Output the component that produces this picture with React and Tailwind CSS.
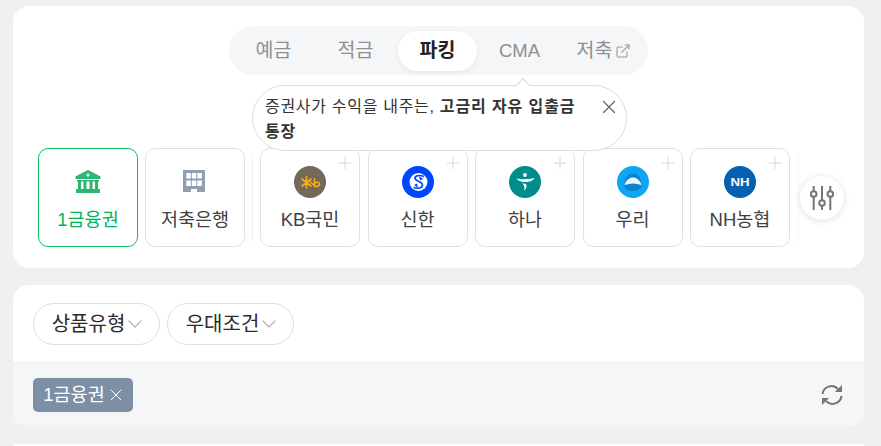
import React from "react";
import { X, Plus, ChevronDown, ExternalLink } from "lucide-react";

const font = "font-['Liberation_Sans','Noto_Sans_CJK_KR',sans-serif]";

function BankIcon() {
  return (
    <svg width="26" height="24" viewBox="0 0 26 24" fill="#2bb673">
      <path d="M13 0 L25.500 6.500 V9 H0.500 V6.500 Z" />
      <circle cx="13" cy="5" r="1.500" fill="#fff" />
      <rect x="2" y="10" width="22" height="1.500" />
      <rect x="3" y="11" width="3" height="8" />
      <rect x="8.500" y="11" width="3" height="8" />
      <rect x="14.500" y="11" width="3" height="8" />
      <rect x="20" y="11" width="3" height="8" />
      <rect x="1" y="19" width="24" height="4" />
    </svg>
  );
}

function BuildingIcon() {
  return (
    <svg width="22" height="22" viewBox="0 0 22 22" className="-mt-[2px] -ml-[2px]">
      <rect width="22" height="22" fill="#8e9eb3" />
      <g fill="#fff">
        <rect x="3.300" y="3" width="4.500" height="5.500" />
        <rect x="8.800" y="3" width="4.500" height="5.500" />
        <rect x="14.300" y="3" width="4.500" height="5.500" />
        <rect x="3.300" y="10.500" width="4.500" height="5.500" />
        <rect x="8.800" y="10.500" width="4.500" height="5.500" />
        <rect x="14.300" y="10.500" width="4.500" height="5.500" />
        <rect x="8" y="19" width="6" height="3" />
      </g>
    </svg>
  );
}

function KbLogo() {
  return (
    <svg width="32" height="32" viewBox="0 0 32 32">
      <circle cx="16" cy="16" r="16" fill="#746859" />
      <g stroke="#f5b21a" strokeWidth="1.600" fill="none" strokeLinecap="round">
        <path d="M12.500 10.500 V22 M8 13 L17 20 M17 13 L8 20" />
        <path d="M15 15 L20 19 M20.500 13 V20 C22 21 25.500 20.500 25.500 18 C25.500 16 22 15.500 20.500 17.500" />
      </g>
    </svg>
  );
}

function ShinhanLogo() {
  return (
    <svg width="32" height="32" viewBox="0 0 32 32">
      <circle cx="16" cy="16" r="16" fill="#0046ff" />
      <circle cx="16.500" cy="16" r="9" fill="#fff" />
      <path d="M22 10.500 C17 8.500 12.500 10 13 12.500 C13.500 15.500 20.500 15 20.500 19 C20.500 22 16 23 11.500 21.500" stroke="#0046ff" strokeWidth="1.600" fill="none" />
      <path d="M17 10 L21 13 L18 14.500 Z M16 22 L12 19 L15 17.500 Z" fill="#0046ff" />
    </svg>
  );
}

function HanaLogo() {
  return (
    <svg width="32" height="32" viewBox="0 0 32 32">
      <circle cx="16" cy="16" r="16" fill="#008c8c" />
      <circle cx="16" cy="9" r="1.900" fill="#fff" />
      <path d="M7 12.500 C12 13.500 20 13.500 25.500 12 C24 15 20 16 17 16 C13.500 16 10 15.500 7 12.500 Z" fill="#fff" />
      <path d="M13.500 17.500 C16 17 18 18 17.500 20.500 C17.200 22 16.500 23.500 15 24.500 C15.800 22.500 15.800 20 13.500 17.500 Z" fill="#fff" />
    </svg>
  );
}

function WooriLogo() {
  return (
    <svg width="32" height="32" viewBox="0 0 32 32">
      <circle cx="16" cy="16" r="16" fill="#0ea5f5" />
      <path d="M7 20 C14 17 19 17 25 20 C23 24 20 25 16 25 C12 25 9 24 7 20 Z" fill="#0d84cf" />
      <path d="M8 15 C9 10 12.500 7.500 16 7.500 C19.500 7.500 23 10 24 15 L24.500 19 C19 17 13 17 7.500 19 Z" fill="#0d84cf" />
      <path d="M7.500 19 C9 14 12.500 11.500 16 11.500 C19.500 11.500 23 14 24.500 19 C19 17 13 17 7.500 19 Z" fill="#e8f6fe" />
    </svg>
  );
}

function NhLogo() {
  return (
    <div className="w-8 h-8 rounded-full bg-[#0561b0] flex items-center justify-center text-white text-[11px] font-bold">
      <span className="scale-x-[1.2]">NH</span>
    </div>
  );
}

function RefreshIcon() {
  return (
    <svg width="22" height="22" viewBox="0 0 22 22" fill="none" stroke="#757575" strokeWidth="2">
      <path d="M1.500 10 A9 9 0 0 1 17 5" />
      <path d="M20.500 12 A9 9 0 0 1 5 17" />
      <polygon points="21,1 21,8 14,8" fill="#757575" stroke="none" />
      <polygon points="1,21 1,14 8,14" fill="#757575" stroke="none" />
    </svg>
  );
}

function Chip({ icon, label, active, plus }) {
  return (
    <div
      className={`relative w-[100px] h-[99px] rounded-[10px] border bg-white flex flex-col items-center ${
        active ? "border-[#00c261]" : "border-[#e0e0e0]"
      }`}
    >
      {plus && <Plus size={20} strokeWidth={1.200} className="absolute top-[4px] right-[4px] text-[#d6d6d6]" />}
      <div className="h-[32px] mt-[17px] flex items-center justify-center">{icon}</div>
      <span className={`mt-[8px] text-[18.500px] leading-[28px] ${active ? "text-[#00b35a]" : "text-[#424242]"}`}>{label}</span>
    </div>
  );
}

function Tab({ children, active }) {
  return (
    <div
      className={`h-[40px] w-[79px] rounded-full flex items-center justify-center text-[19.500px] ${
        active ? "bg-white font-bold text-[#222] shadow-[0_2px_6px_rgba(0,0,0,0.06)]" : "text-[#8f8f8f]"
      }`}
    >
      {children}
    </div>
  );
}

function Filter({ label }) {
  return (
    <div className="h-[42px] w-[127px] pl-[5px] rounded-full border border-[#dedede] flex items-center justify-center text-[20px] text-[#2b2b2b]">
      <span>{label}</span>
      <ChevronDown size={24} strokeWidth={1.300} className="-ml-[2px] -mr-[1px] text-[#b5b5ad]" />
    </div>
  );
}

export default function App() {
  return (
    <div className={`${font} h-[446px] overflow-hidden bg-[#eff0f2] pl-[13px] pr-[17px] pt-[6px] flex flex-col gap-[17px]`}>
      {/* 상단 카드 */}
      <div className="relative shrink-0 h-[262px] bg-white rounded-[16px]">
        <div className="flex justify-center pt-[20px]">
          <div className="w-[419px] h-[49px] rounded-full bg-[#f5f6f8] flex items-center gap-[3px] px-[5px]">
            <Tab>예금</Tab>
            <Tab>적금</Tab>
            <Tab active>파킹</Tab>
            <Tab>
              <span className="text-[18.500px]">CMA</span>
            </Tab>
            <Tab>
              <span className="pl-[5px] shrink-0">저축</span>
              <ExternalLink size={16} strokeWidth={1.600} className="ml-[3px] shrink-0 text-[#999]" />
            </Tab>
          </div>
        </div>

        {/* 말풍선 */}
        <div className="absolute z-10 left-[239px] top-[79px] w-[375px] h-[66px] rounded-[33px] border border-[#dcdcdc] bg-white pl-[12px] pr-[34px] pt-[8px] text-[16px] tracking-[0.7px] leading-[25px] text-[#333]">
          <div className="absolute -top-[6px] left-[265px] w-[10px] h-[10px] rotate-45 bg-white border-l border-t border-[#dcdcdc]"></div>
          <span>증권사가 수익을 내주는, </span>
          <b className="tracking-[0.9px]">고금리 자유 입출금</b>
          <br />
          <b className="tracking-[0.9px]">통장</b>
          <X size={22} strokeWidth={1.300} className="absolute top-[10px] right-[6px] text-[#666]" />
        </div>

        {/* 금융사 목록 */}
        <div className="flex items-center pl-[25px] mt-[73px]">
          <div className="flex gap-[7px]">
            <Chip active icon={<BankIcon />} label="1금융권" />
            <Chip icon={<BuildingIcon />} label="저축은행" />
          </div>
          <div className="w-px h-[88px] bg-[#efefef] mx-[7px]"></div>
          <div className="flex gap-[7.500px]">
            <Chip plus icon={<KbLogo />} label="KB국민" />
            <Chip plus icon={<ShinhanLogo />} label="신한" />
            <Chip plus icon={<HanaLogo />} label="하나" />
            <Chip plus icon={<WooriLogo />} label="우리" />
            <Chip plus icon={<NhLogo />} label="NH농협" />
          </div>
          <div className="w-px h-[88px] bg-[#f6f6f6] ml-[8px]"></div>
          <div className="ml-[1px] w-[44px] h-[44px] rounded-full bg-white shadow-[0_1px_6px_rgba(0,0,0,0.14)] flex items-center justify-center">
            <svg width="24" height="24" viewBox="0 0 24 24" fill="none" stroke="#757575" strokeWidth="2">
              <path d="M3.700 0 V5 M3.700 11 V24 M12 0 V14 M12 20 V24 M20.300 0 V5 M20.300 11 V24" />
              <circle cx="3.700" cy="8" r="2.800" />
              <circle cx="12" cy="17" r="2.800" />
              <circle cx="20.300" cy="8" r="2.800" />
            </svg>
          </div>
        </div>
      </div>

      {/* 필터 카드 */}
      <div className="shrink-0 h-[142px] bg-white rounded-[16px] overflow-hidden flex flex-col">
        <div className="h-[78px] flex items-start gap-[7px] px-[20px] pt-[18px] border-b border-[#eeeff1]">
          <Filter label="상품유형" />
          <Filter label="우대조건" />
        </div>
        <div className="flex-1 bg-[#f5f6f8] flex items-center justify-between pl-[20px] pr-[21px]">
          <div className="h-[34px] w-[100px] rounded-[5px] bg-[#7d8fa5] text-white text-[18.500px] flex items-center justify-center">
            <span>1금융권</span>
            <X size={20} strokeWidth={1.200} className="-mr-[3px] ml-[1px]" />
          </div>
          <RefreshIcon />
        </div>
      </div>

      {/* 다음 카드 */}
      <div className="flex-1 bg-white rounded-t-[16px]"></div>
    </div>
  );
}
